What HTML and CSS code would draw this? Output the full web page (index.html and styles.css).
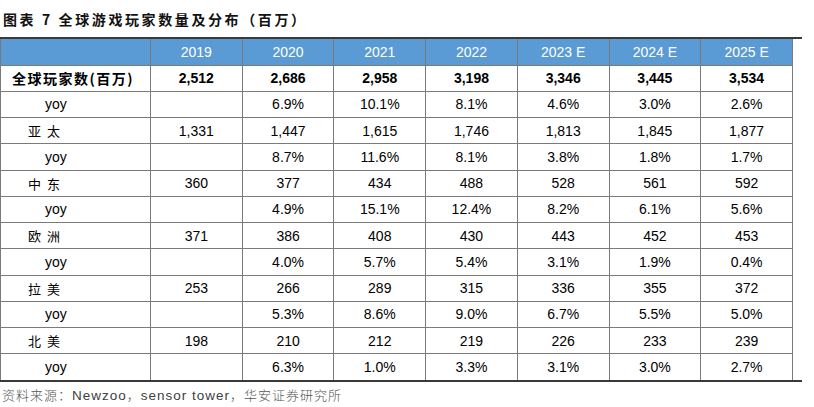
FILE: index.html
```html
<!DOCTYPE html>
<html lang="zh">
<head>
<meta charset="utf-8">
<link rel="stylesheet" href="styles.css">
</head>
<body>
<div class="title">图表 7 全球游戏玩家数量及分布（百万）</div>
<div class="frame">
<table class="data">
<colgroup>
<col class="c-label"><col><col><col><col><col><col><col>
</colgroup>
<thead>
<tr><th></th><th>2019</th><th>2020</th><th>2021</th><th>2022</th><th>2023 E</th><th>2024 E</th><th>2025 E</th></tr>
</thead>
<tbody>
<tr class="total"><td class="lbl">全球玩家数(百万)</td><td>2,512</td><td>2,686</td><td>2,958</td><td>3,198</td><td>3,346</td><td>3,445</td><td>3,534</td></tr>
<tr><td class="yoy">yoy</td><td></td><td>6.9%</td><td>10.1%</td><td>8.1%</td><td>4.6%</td><td>3.0%</td><td>2.6%</td></tr>
<tr><td class="region">亚太</td><td>1,331</td><td>1,447</td><td>1,615</td><td>1,746</td><td>1,813</td><td>1,845</td><td>1,877</td></tr>
<tr><td class="yoy">yoy</td><td></td><td>8.7%</td><td>11.6%</td><td>8.1%</td><td>3.8%</td><td>1.8%</td><td>1.7%</td></tr>
<tr><td class="region">中东</td><td>360</td><td>377</td><td>434</td><td>488</td><td>528</td><td>561</td><td>592</td></tr>
<tr><td class="yoy">yoy</td><td></td><td>4.9%</td><td>15.1%</td><td>12.4%</td><td>8.2%</td><td>6.1%</td><td>5.6%</td></tr>
<tr><td class="region">欧洲</td><td>371</td><td>386</td><td>408</td><td>430</td><td>443</td><td>452</td><td>453</td></tr>
<tr><td class="yoy">yoy</td><td></td><td>4.0%</td><td>5.7%</td><td>5.4%</td><td>3.1%</td><td>1.9%</td><td>0.4%</td></tr>
<tr><td class="region">拉美</td><td>253</td><td>266</td><td>289</td><td>315</td><td>336</td><td>355</td><td>372</td></tr>
<tr><td class="yoy">yoy</td><td></td><td>5.3%</td><td>8.6%</td><td>9.0%</td><td>6.7%</td><td>5.5%</td><td>5.0%</td></tr>
<tr><td class="region">北美</td><td>198</td><td>210</td><td>212</td><td>219</td><td>226</td><td>233</td><td>239</td></tr>
<tr><td class="yoy">yoy</td><td></td><td>6.3%</td><td>1.0%</td><td>3.3%</td><td>3.1%</td><td>3.0%</td><td>2.7%</td></tr>
</tbody>
</table>
</div>
<div class="source"><span class="cjk">资料来源：</span>Newzoo<span class="cjk">，</span>sensor tower<span class="cjk">，华安证券研究所</span></div>
</body>
</html>
```
FILE: styles.css
```css
html, body {
  margin: 0;
  padding: 0;
  background: #fff;
}
body {
  width: 814px;
  height: 407px;
  overflow: hidden;
  font-family: "Liberation Sans", "Noto Sans CJK SC", sans-serif;
  color: #000;
}
.title {
  box-sizing: border-box;
  height: 37px;
  padding: 10px 0 0 3px;
  font-family: "Noto Sans CJK SC", sans-serif;
  font-weight: 700;
  font-size: 14px;
  line-height: 18px;
  letter-spacing: 2.6px;
  color: #111;
}
.frame {
  width: 802px;
  border-top: 2px solid #3a3a3a;
  border-bottom: 2px solid #3a3a3a;
}
.data {
  width: 793px;
  border-collapse: collapse;
  table-layout: fixed;
  font-size: 14px;
}
.c-label {
  width: 150px;
}
.data th,
.data td {
  border: 1px solid #7a7a7a;
  padding: 0;
  text-align: center;
  white-space: nowrap;
}
.data thead tr {
  height: 26px;
}
.data tbody tr {
  height: 26.25px;
}
.data thead th {
  background: #5b9bd5;
  color: #fff;
  font-weight: 400;
  border-top: none;
}
.data tbody tr:last-child td {
  border-bottom: none;
}
.total td {
  font-weight: 700;
}
.data td.lbl {
  text-align: left;
  padding-left: 11px;
  font-family: "Noto Sans CJK SC", sans-serif;
  font-size: 14px;
  letter-spacing: 1.5px;
}
.data td.yoy {
  text-align: left;
  padding-left: 44px;
  font-size: 14px;
}
.data td.region {
  text-align: left;
  padding-left: 27px;
  font-family: "Noto Sans CJK SC", sans-serif;
  font-size: 13px;
  letter-spacing: 6px;
}
.source {
  padding: 4px 0 0 2px;
  font-size: 13.5px;
  line-height: 17px;
  letter-spacing: 1px;
  color: #404040;
}
.source .cjk {
  font-family: "Noto Sans CJK SC", sans-serif;
  font-size: 13px;
  font-weight: 300;
  color: #555;
}
```
